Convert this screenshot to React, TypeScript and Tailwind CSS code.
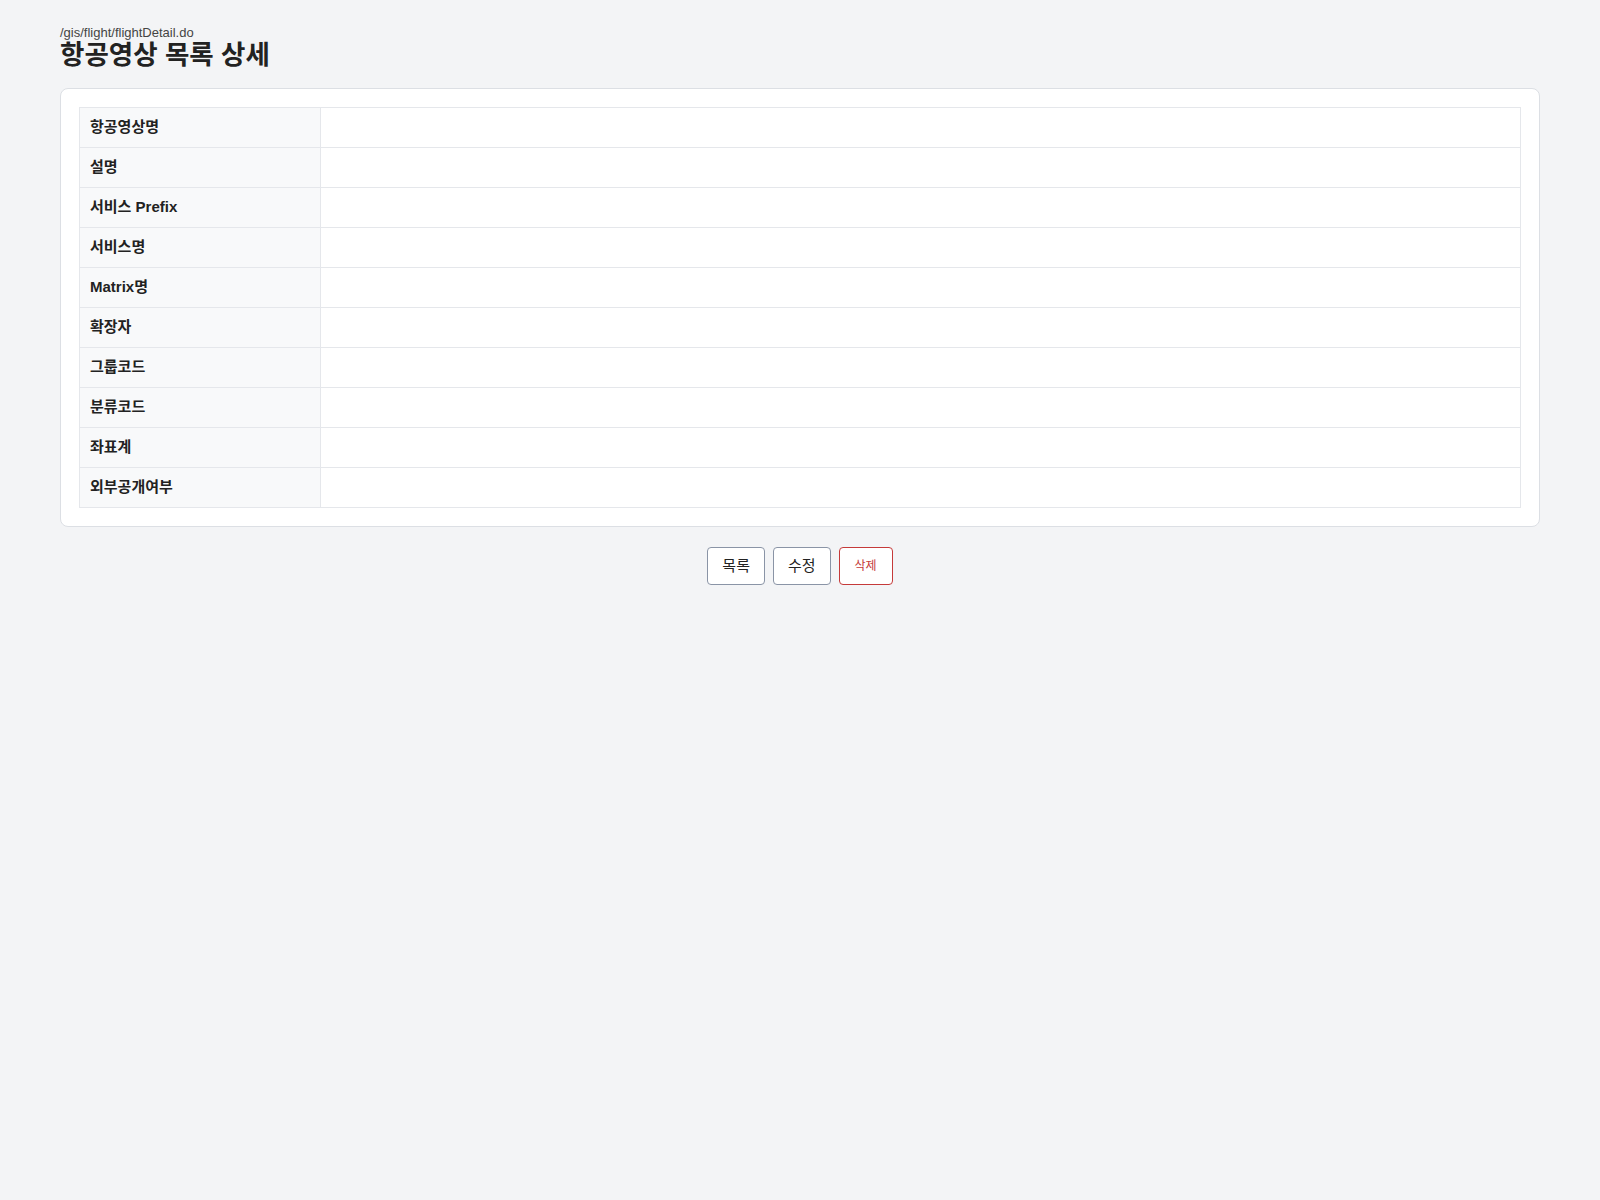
const rows = [
  '항공영상명',
  '설명',
  '서비스 Prefix',
  '서비스명',
  'Matrix명',
  '확장자',
  '그룹코드',
  '분류코드',
  '좌표계',
  '외부공개여부',
]

export default function App() {
  return (
    <main
      className="min-h-screen bg-[#f3f4f6] px-[60px] pt-[25px] text-[#222]"
      style={{ fontFamily: '"Liberation Sans", "Noto Sans CJK KR", sans-serif' }}
    >
      <p className="text-[13px] leading-[15px] text-[#444]">/gis/flight/flightDetail.do</p>
      <h1 className="text-[26.5px] font-bold leading-[30px] mb-[18px]">항공영상 목록 상세</h1>

      <div className="bg-white border border-[#dcdfe4] rounded-[8px] p-[18px]">
        <table className="w-full border-collapse">
          <tbody>
            {rows.map((label) => (
              <tr key={label} className="h-[40px]">
                <th className="w-[241px] border border-[#e5e7eb] bg-[#f8f9fa] px-[10px] text-left text-[15px] font-bold">
                  {label}
                </th>
                <td className="border border-[#e5e7eb]"></td>
              </tr>
            ))}
          </tbody>
        </table>
      </div>

      <div className="flex justify-center gap-[8px] mt-[20px]">
        <button className="h-[38px] px-[14px] bg-white border border-[#8a94a6] rounded-[4px] text-[15px]">
          목록
        </button>
        <button className="h-[38px] px-[14px] bg-white border border-[#8a94a6] rounded-[4px] text-[15px]">
          수정
        </button>
        <button className="h-[38px] px-[15px] bg-white border border-[#c53a3a] rounded-[4px] text-[12px] text-[#c53a3a]">
          삭제
        </button>
      </div>
    </main>
  )
}
